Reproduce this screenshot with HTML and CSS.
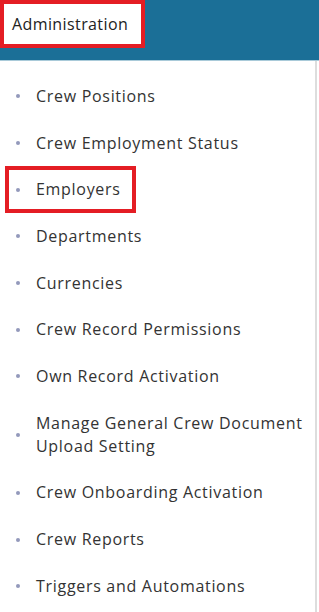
FILE: index.html
```html
<!DOCTYPE html>
<html>
<head>
<meta charset="utf-8">
<link rel="stylesheet" href="styles.css">
</head>
<body>
<header class="topbar">
  <div class="title-box">Administration</div>
</header>
<ul class="menu">
  <li class="item"><span class="dot"></span><span class="label">Crew Positions</span></li>
  <li class="item"><span class="dot"></span><span class="label">Crew Employment Status</span></li>
  <li class="item item-marked"><span class="dot"></span><span class="label">Employers</span></li>
  <li class="item"><span class="dot"></span><span class="label">Departments</span></li>
  <li class="item"><span class="dot"></span><span class="label">Currencies</span></li>
  <li class="item"><span class="dot"></span><span class="label">Crew Record Permissions</span></li>
  <li class="item"><span class="dot"></span><span class="label">Own Record Activation</span></li>
  <li class="item"><span class="dot"></span><span class="label">Manage General Crew Document Upload Setting</span></li>
  <li class="item"><span class="dot"></span><span class="label">Crew Onboarding Activation</span></li>
  <li class="item"><span class="dot"></span><span class="label">Crew Reports</span></li>
  <li class="item"><span class="dot"></span><span class="label">Triggers and Automations</span></li>
</ul>
</body>
</html>
```

FILE: styles.css
```css
html, body {
  margin: 0;
  padding: 0;
  background: #ffffff;
}
body {
  font-family: "Open Sans", "DejaVu Sans", sans-serif;
  color: #333333;
  width: 319px;
  height: 612px;
  overflow: hidden;
}
.topbar {
  height: 61px;
  background: #1b6f97;
  border-bottom: 1px solid #a9cad9;
  box-sizing: border-box;
}
.title-box {
  width: 145px;
  height: 48px;
  box-sizing: border-box;
  border: 4px solid #e41d24;
  background: #ffffff;
  color: #222222;
  font-size: 16px;
  letter-spacing: 0.4px;
  line-height: 40px;
  padding-left: 8px;
}
.menu {
  list-style: none;
  margin: 0;
  padding: 12px 0 0 0;
  border-right: 2px solid #dddddd;
  width: 317px;
  height: 551px;
  box-sizing: border-box;
}
.item {
  display: flex;
  align-items: center;
  padding: 11.85px 4px 11.85px 16px;
  font-size: 16px;
  letter-spacing: 0.7px;
  line-height: 23px;
}
.dot {
  flex: none;
  width: 4px;
  height: 4px;
  border-radius: 50%;
  background: #9399bb;
  margin-right: 16px;
}
.item-marked {
  width: fit-content;
  margin-left: 5px;
  padding-left: 11px;
  padding-right: 15px;
  box-shadow: inset 0 0 0 4px #e41d24;
}
```
